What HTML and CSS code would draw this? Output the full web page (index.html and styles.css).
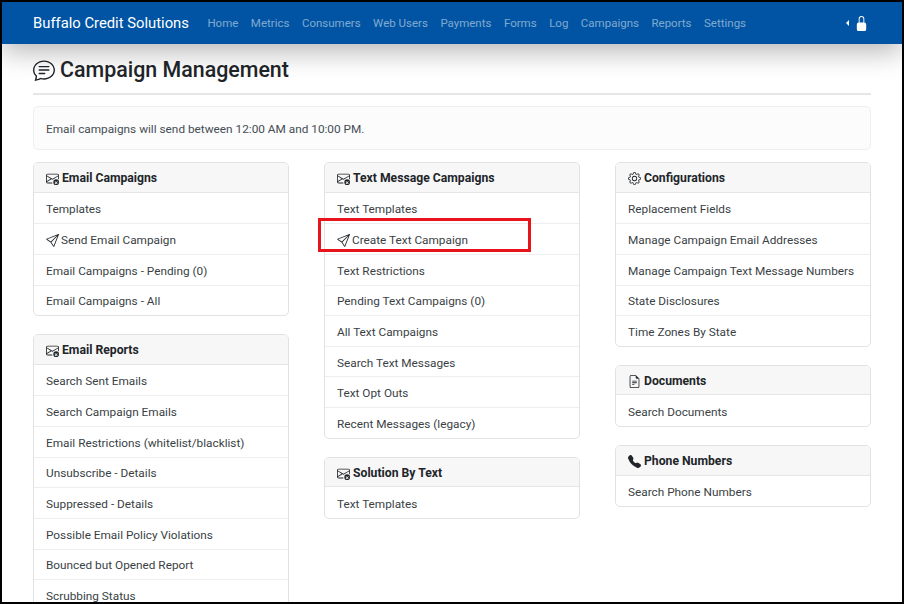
FILE: index.html
```html
<!DOCTYPE html>
<html lang="en">
<head>
<meta charset="utf-8">
<title>Campaign Management</title>
<link rel="stylesheet" href="styles.css">
</head>
<body>
<svg class="defs" aria-hidden="true">
  <symbol id="i-chat" viewBox="0 0 16 16"><path d="M2.678 11.894a1 1 0 0 1 .287.801 10.97 10.97 0 0 1-.398 2c1.395-.323 2.247-.697 2.634-.893a1 1 0 0 1 .71-.074A8.06 8.06 0 0 0 8 14c3.996 0 7-2.807 7-6 0-3.192-3.004-6-7-6S1 4.808 1 8c0 1.468.617 2.83 1.678 3.894zm-.493 3.905a21.682 21.682 0 0 1-.713.129c-.2.032-.352-.176-.273-.362a9.68 9.68 0 0 0 .244-.637l.003-.01c.248-.72.45-1.548.524-2.319C.743 11.37 0 9.76 0 8c0-3.866 3.582-7 8-7s8 3.134 8 7-3.582 7-8 7a9.06 9.06 0 0 1-2.347-.306c-.52.263-1.639.742-3.468 1.105z"/><path d="M4 5.5a.5.5 0 0 1 .5-.5h7a.5.5 0 0 1 0 1h-7a.5.5 0 0 1-.5-.5zM4 8a.5.5 0 0 1 .5-.5h7a.5.5 0 0 1 0 1h-7A.5.5 0 0 1 4 8zm0 2.5a.5.5 0 0 1 .5-.5h4a.5.5 0 0 1 0 1h-4a.5.5 0 0 1-.5-.5z"/></symbol>
  <symbol id="i-mail" viewBox="0 0 16 16"><path d="M2 2a2 2 0 0 0-2 2v8.01A2 2 0 0 0 2 14h5.5a.5.5 0 0 0 0-1H2a1 1 0 0 1-.966-.741l5.64-3.471L8 9.583l7-4.2V8.5a.5.5 0 0 0 1 0V4a2 2 0 0 0-2-2H2Zm3.708 6.208L1 11.105V5.383l4.708 2.825ZM1 4.217V4a1 1 0 0 1 1-1h12a1 1 0 0 1 1 1v.217l-7 4.2-7-4.2Z"/><path d="M12.5 16a3.5 3.5 0 1 0 0-7 3.5 3.5 0 0 0 0 7Zm-1.2-4.7 1.2 1.2 1.2-1.2.7.7-1.2 1.2 1.2 1.2-.7.7-1.2-1.2-1.2 1.2-.7-.7 1.2-1.2-1.2-1.2Z"/></symbol>
  <symbol id="i-send" viewBox="0 0 16 16"><path d="M15.854.146a.5.5 0 0 1 .11.54l-5.819 14.547a.75.75 0 0 1-1.329.124l-3.178-4.995L.643 7.184a.75.75 0 0 1 .124-1.33L15.314.037a.5.5 0 0 1 .54.11ZM6.636 10.07l2.761 4.338L14.13 2.576 6.636 10.07Zm6.787-8.201L1.591 6.602l4.339 2.76 7.494-7.493Z"/></symbol>
  <symbol id="i-gear" viewBox="0 0 16 16"><path d="M8 4.754a3.246 3.246 0 1 0 0 6.492 3.246 3.246 0 0 0 0-6.492zM5.754 8a2.246 2.246 0 1 1 4.492 0 2.246 2.246 0 0 1-4.492 0z"/><path fill-rule="evenodd" d="M9.796 1.343c-.527-1.79-3.065-1.79-3.592 0l-.094.319a.873.873 0 0 1-1.255.52l-.292-.16c-1.64-.892-3.433.902-2.54 2.541l.159.292a.873.873 0 0 1-.52 1.255l-.319.094c-1.79.527-1.79 3.065 0 3.592l.319.094a.873.873 0 0 1 .52 1.255l-.16.292c-.892 1.64.901 3.434 2.541 2.54l.292-.159a.873.873 0 0 1 1.255.52l.094.319c.527 1.79 3.065 1.79 3.592 0l.094-.319a.873.873 0 0 1 1.255-.52l.292.16c1.64.893 3.434-.902 2.54-2.541l-.159-.292a.873.873 0 0 1 .52-1.255l.319-.094c1.79-.527 1.79-3.065 0-3.592l-.319-.094a.873.873 0 0 1-.52-1.255l.16-.292c.893-1.64-.902-3.433-2.541-2.54l-.292.159a.873.873 0 0 1-1.255-.52l-.094-.319zm-2.633.283c.246-.835 1.428-.835 1.674 0l.094.319a1.873 1.873 0 0 0 2.693 1.115l.291-.16c.764-.415 1.6.42 1.184 1.185l-.159.292a1.873 1.873 0 0 0 1.116 2.692l.318.094c.835.246.835 1.428 0 1.674l-.319.094a1.873 1.873 0 0 0-1.115 2.693l.16.291c.415.764-.42 1.6-1.185 1.184l-.291-.159a1.873 1.873 0 0 0-2.693 1.116l-.094.318c-.246.835-1.428.835-1.674 0l-.094-.319a1.873 1.873 0 0 0-2.692-1.115l-.292.16c-.764.415-1.6-.42-1.184-1.185l.159-.291A1.873 1.873 0 0 0 1.945 8.93l-.319-.094c-.835-.246-.835-1.428 0-1.674l.319-.094A1.873 1.873 0 0 0 3.06 4.377l-.16-.292c-.415-.764.42-1.6 1.185-1.184l.292.159a1.873 1.873 0 0 0 2.692-1.115l.094-.319z"/></symbol>
  <symbol id="i-file" viewBox="0 0 16 16"><path d="M5.5 7a.5.5 0 0 0 0 1h5a.5.5 0 0 0 0-1h-5zM5 9.5a.5.5 0 0 1 .5-.5h5a.5.5 0 0 1 0 1h-5a.5.5 0 0 1-.5-.5zm0 2a.5.5 0 0 1 .5-.5h2a.5.5 0 0 1 0 1h-2a.5.5 0 0 1-.5-.5z"/><path d="M9.5 0H4a2 2 0 0 0-2 2v12a2 2 0 0 0 2 2h8a2 2 0 0 0 2-2V4.5L9.5 0zm0 1v2A1.5 1.5 0 0 0 11 4.5h2V14a1 1 0 0 1-1 1H4a1 1 0 0 1-1-1V2a1 1 0 0 1 1-1h5.5z"/></symbol>
  <symbol id="i-phone" viewBox="0 0 16 16"><path d="M1.885.511a1.745 1.745 0 0 1 2.61.163L6.29 2.98c.329.423.445.974.315 1.494l-.547 2.19a.678.678 0 0 0 .178.643l2.457 2.457a.678.678 0 0 0 .644.178l2.189-.547a1.745 1.745 0 0 1 1.494.315l2.306 1.794c.829.645.905 1.87.163 2.611l-1.034 1.034c-.74.74-1.846 1.065-2.877.702a18.634 18.634 0 0 1-7.01-4.42 18.634 18.634 0 0 1-4.42-7.009c-.362-1.03-.037-2.137.703-2.877L1.885.511z"/></symbol>
  <symbol id="i-lock" viewBox="0 0 16 16"><path d="M8 1a2 2 0 0 1 2 2v4H6V3a2 2 0 0 1 2-2zm3 6V3a3 3 0 0 0-6 0v4a2 2 0 0 0-2 2v5a2 2 0 0 0 2 2h6a2 2 0 0 0 2-2V9a2 2 0 0 0-2-2z"/></symbol>
</svg>
<div class="frame">
  <nav class="navbar">
    <a class="brand">Buffalo Credit Solutions</a>
    <ul class="nav-links">
      <li>Home</li><li>Metrics</li><li>Consumers</li><li>Web Users</li><li>Payments</li><li>Forms</li><li>Log</li><li>Campaigns</li><li>Reports</li><li>Settings</li>
    </ul>
    <div class="nav-tools">
      <span class="caret"></span>
      <svg class="lock"><use href="#i-lock"/></svg>
    </div>
  </nav>
  <main class="content">
    <h1 class="title"><svg class="title-icon"><use href="#i-chat"/></svg>Campaign Management</h1>
    <div class="notice">Email campaigns will send between 12:00 AM and 10:00 PM.</div>
    <div class="columns">
      <div class="column">
        <section class="card">
          <h2 class="card-head"><svg class="ico"><use href="#i-mail"/></svg>Email Campaigns</h2>
          <ul class="list">
            <li>Templates</li>
            <li><svg class="ico"><use href="#i-send"/></svg>Send Email Campaign</li>
            <li>Email Campaigns - Pending (0)</li>
            <li>Email Campaigns - All</li>
          </ul>
        </section>
        <section class="card">
          <h2 class="card-head"><svg class="ico"><use href="#i-mail"/></svg>Email Reports</h2>
          <ul class="list">
            <li>Search Sent Emails</li>
            <li>Search Campaign Emails</li>
            <li>Email Restrictions (whitelist/blacklist)</li>
            <li>Unsubscribe - Details</li>
            <li>Suppressed - Details</li>
            <li>Possible Email Policy Violations</li>
            <li>Bounced but Opened Report</li>
            <li>Scrubbing Status</li>
          </ul>
        </section>
      </div>
      <div class="column">
        <section class="card">
          <h2 class="card-head"><svg class="ico"><use href="#i-mail"/></svg>Text Message Campaigns</h2>
          <ul class="list">
            <li>Text Templates</li>
            <li class="marked"><svg class="ico"><use href="#i-send"/></svg>Create Text Campaign</li>
            <li>Text Restrictions</li>
            <li>Pending Text Campaigns (0)</li>
            <li>All Text Campaigns</li>
            <li>Search Text Messages</li>
            <li>Text Opt Outs</li>
            <li>Recent Messages (legacy)</li>
          </ul>
        </section>
        <section class="card">
          <h2 class="card-head"><svg class="ico"><use href="#i-mail"/></svg>Solution By Text</h2>
          <ul class="list">
            <li>Text Templates</li>
          </ul>
        </section>
      </div>
      <div class="column">
        <section class="card">
          <h2 class="card-head"><svg class="ico"><use href="#i-gear"/></svg>Configurations</h2>
          <ul class="list">
            <li>Replacement Fields</li>
            <li>Manage Campaign Email Addresses</li>
            <li>Manage Campaign Text Message Numbers</li>
            <li>State Disclosures</li>
            <li>Time Zones By State</li>
          </ul>
        </section>
        <section class="card">
          <h2 class="card-head"><svg class="ico"><use href="#i-file"/></svg>Documents</h2>
          <ul class="list">
            <li>Search Documents</li>
          </ul>
        </section>
        <section class="card">
          <h2 class="card-head"><svg class="ico"><use href="#i-phone"/></svg>Phone Numbers</h2>
          <ul class="list">
            <li>Search Phone Numbers</li>
          </ul>
        </section>
      </div>
    </div>
  </main>
</div>
</body>
</html>
```
FILE: styles.css
```css
*, *::after { box-sizing: border-box; }
html, body { margin: 0; padding: 0; background: #fff; overflow: hidden; }
body { font-family: Roboto, "Noto Sans", sans-serif; color: #212529; }
.defs { display: none; }
.frame { width: 904px; height: 604px; border: 2px solid #000; overflow: hidden; position: relative; background: #fff; }
.navbar { height: 42px; background: #0054a3; display: flex; align-items: center; padding: 0 33px 0 31px; box-shadow: 0 7px 28px rgba(0,0,0,.3); position: relative; }
.brand { color: #fff; font-size: 14.8px; margin-right: 18.5px; white-space: nowrap; }
.nav-links { list-style: none; display: flex; gap: 12.5px; margin: 0; padding: 0; color: rgba(255,255,255,.5); font-size: 11.5px; white-space: nowrap; }
.nav-tools { margin-left: auto; display: flex; align-items: center; gap: 5px; }
.caret { width: 0; height: 0; border: 3px solid transparent; border-right-color: #fff; border-left-width: 0; }
.lock { width: 15px; height: 15px; fill: #fff; }
.content { padding: 0 31px; }
.title { margin: 0; height: 51px; padding-top: 3px; display: flex; align-items: center; gap: 5px; font-size: 21.4px; font-weight: 500; line-height: 28px; border-bottom: 2px solid #e6e6e6; color: #212529; }
.title-icon { width: 22px; height: 22px; fill: #212529; }
.notice { margin-top: 11px; height: 44px; border: 1px solid #eee; border-radius: 5px; background: #fcfcfc; padding: 1px 12px 0; display: flex; align-items: center; font-size: 11.8px; color: #454d55; }
.columns { margin-top: 12px; display: grid; grid-template-columns: repeat(3, 256px); column-gap: 35px; }
.column { display: flex; flex-direction: column; gap: 18px; }
.card { border: 1px solid #e2e2e2; border-radius: 5px; background: #fff; }
.card-head { margin: 0; height: 29.6px; background: #f7f7f7; border-bottom: 1px solid #e6e6e6; border-radius: 4px 4px 0 0; padding: 2px 12px 0; display: flex; align-items: center; gap: 3px; font-size: 12.2px; font-weight: 700; color: #212529; white-space: nowrap; }
.ico { width: 13px; height: 13px; fill: #212529; flex: none; }
.list { list-style: none; margin: 0; padding: 0; font-size: 11.8px; color: #3a3f45; }
.list li { height: 30.65px; padding: 2px 12px 0; display: flex; align-items: center; gap: 2px; white-space: nowrap; border-top: 1px solid #eee; }
.list li:first-child { border-top: 0; }
.marked { position: relative; }
.marked::after { content: ""; position: absolute; left: -7px; top: -6px; width: 213px; height: 34px; border: 3px solid #e8141c; }
```
